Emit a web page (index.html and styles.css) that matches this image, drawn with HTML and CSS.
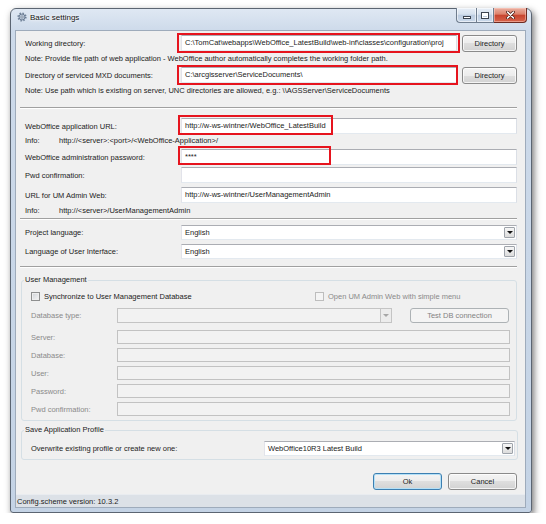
FILE: index.html
```html
<!DOCTYPE html>
<html>
<head>
<meta charset="utf-8">
<title>Basic settings</title>
<link rel="stylesheet" href="styles.css">
</head>
<body>
<div class="window">
  <div class="titlebar">
    <svg class="appicon" width="10" height="10" viewBox="0 0 10 10">
      <circle cx="5" cy="5" r="3.6" fill="none" stroke="#6f8298" stroke-width="2" stroke-dasharray="1.4 1.43"/>
      <circle cx="5" cy="5" r="3" fill="#b7c5d5" stroke="#5f7088" stroke-width="0.8"/>
      <circle cx="5" cy="5" r="1.1" fill="#e9eef4" stroke="#5f7088" stroke-width="0.6"/>
    </svg>
    <span class="title">Basic settings</span>
    <div class="caption">
      <div class="cbtn min"><span class="g-min"></span></div>
      <div class="cbtn max"><span class="g-max"></span></div>
      <div class="cbtn close">
        <svg width="9" height="8" viewBox="0 0 9 8">
          <path d="M1.5 1 L7.5 7 M7.5 1 L1.5 7" stroke="#4a1a12" stroke-width="3" stroke-linecap="round"/>
          <path d="M1.5 1 L7.5 7 M7.5 1 L1.5 7" stroke="#ffffff" stroke-width="1.6" stroke-linecap="round"/>
        </svg>
      </div>
    </div>
  </div>

  <div class="client">
    <div class="row r-a">
      <span class="lbl">Working directory:</span>
      <div class="field f-dir">
        <div class="tb">C:\TomCat\webapps\WebOffice_LatestBuild\web-inf\classes\configuration\proj</div>
        <span class="mark mark-a"></span>
      </div>
      <div class="btn dirbtn">Directory</div>
    </div>
    <div class="note n1">Note: Provide file path of web application - WebOffice author automatically completes the working folder path.</div>
    <div class="row r-b">
      <span class="lbl">Directory of serviced MXD documents:</span>
      <div class="field f-dir">
        <div class="tb">C:\arcgisserver\ServiceDocuments\</div>
        <span class="mark mark-b"></span>
      </div>
      <div class="btn dirbtn">Directory</div>
    </div>
    <div class="note n2">Note: Use path which is existing on server, UNC directories are allowed, e.g.: \\AGSServer\ServiceDocuments</div>

    <div class="sep s1"></div>

    <div class="row r-c">
      <span class="lbl">WebOffice application URL:</span>
      <div class="field grow">
        <div class="tb">http://w-ws-wintner/WebOffice_LatestBuild</div>
        <span class="mark mark-c"></span>
      </div>
    </div>
    <div class="info i1"><span class="ilbl">Info:</span><span>http://&lt;server&gt;:&lt;port&gt;/&lt;WebOffice-Application&gt;/</span></div>
    <div class="row r-d">
      <span class="lbl">WebOffice administration password:</span>
      <div class="field grow">
        <div class="tb">****</div>
        <span class="mark mark-d"></span>
      </div>
    </div>
    <div class="row r-e">
      <span class="lbl">Pwd confirmation:</span>
      <div class="field grow"><div class="tb"></div></div>
    </div>
    <div class="row r-f">
      <span class="lbl">URL for UM Admin Web:</span>
      <div class="field grow"><div class="tb">http://w-ws-wintner/UserManagementAdmin</div></div>
    </div>
    <div class="info i2"><span class="ilbl">Info:</span><span>http://&lt;server&gt;/UserManagementAdmin</span></div>

    <div class="sep s2"></div>

    <div class="row r-g">
      <span class="lbl">Project language:</span>
      <div class="combo grow"><span class="val">English</span><span class="arrow"></span></div>
    </div>
    <div class="row r-h">
      <span class="lbl">Language of User Interface:</span>
      <div class="combo grow"><span class="val">English</span><span class="arrow"></span></div>
    </div>

    <div class="sep s3"></div>

    <fieldset class="group g-um">
      <legend>User Management</legend>
      <div class="cbrow">
        <div class="cbitem first"><span class="cb"></span><span>Synchronize to User Management Database</span></div>
        <div class="cbitem disabled"><span class="cb off"></span><span>Open UM Admin Web with simple menu</span></div>
      </div>
      <div class="urow u-type">
        <span class="ulbl">Database type:</span>
        <div class="combo dis dbcombo"><span class="val"></span><span class="arrow"></span></div>
        <div class="btn disbtn">Test DB connection</div>
      </div>
      <div class="urow u-box"><span class="ulbl">Server:</span><div class="dbox"></div></div>
      <div class="urow u-box"><span class="ulbl">Database:</span><div class="dbox"></div></div>
      <div class="urow u-box"><span class="ulbl">User:</span><div class="dbox"></div></div>
      <div class="urow u-box"><span class="ulbl">Password:</span><div class="dbox"></div></div>
      <div class="urow u-box"><span class="ulbl">Pwd confirmation:</span><div class="dbox"></div></div>
    </fieldset>

    <fieldset class="group g-save">
      <legend>Save Application Profile</legend>
      <div class="srow">
        <span class="slbl">Overwrite existing profile or create new one:</span>
        <div class="combo scombo"><span class="val">WebOffice10R3 Latest Build</span><span class="arrow"></span></div>
      </div>
    </fieldset>

    <div class="actions">
      <div class="btn okbtn">Ok</div>
      <div class="btn">Cancel</div>
    </div>

    <div class="status">Config.scheme version: 10.3.2</div>
  </div>
</div>
</body>
</html>
```

FILE: styles.css
```css
* { box-sizing: border-box; }

body {
  margin: 0;
  background: #ffffff;
  font-family: "Liberation Sans", Arial, sans-serif;
  font-size: 7.5px;
  color: #222222;
}

.window {
  margin: 8px 0 0 10px;
  width: 522px;
  height: 505px;
  border: 1px solid #5b6572;
  border-radius: 6px 6px 3px 3px;
  background: linear-gradient(#dfe8f3 0px, #cddaea 22px, #c4d3e5 100%);
  box-shadow: 2px 3px 7px rgba(0, 0, 0, 0.55);
  padding: 0 5px 4px 4px;
  display: flex;
  flex-direction: column;
}

/* title bar */
.titlebar {
  height: 21px;
  display: flex;
  align-items: flex-start;
  flex: none;
}
.appicon { margin: 3px 0 0 2px; flex: none; }
.title {
  margin: 3px 0 0 3px;
  line-height: 12px;
  font-size: 8px;
  color: #111;
  text-shadow: 0 0 4px #fff, 0 0 2px #fff;
}
.caption {
  margin: -1px -1px 0 auto;
  display: flex;
  height: 15px;
}
.cbtn {
  height: 15px;
  border: 1px solid #6f7d8e;
  border-top: none;
  display: flex;
  align-items: center;
  justify-content: center;
  background: linear-gradient(#e7eef7 0%, #d6e1ee 45%, #bccce0 50%, #cad9eb 100%);
  box-shadow: inset 0 0 0 1px rgba(255, 255, 255, 0.55);
}
.cbtn.min { width: 20px; border-radius: 0 0 0 4px; border-right: none; }
.cbtn.max { width: 18px; }
.cbtn.close {
  width: 33px;
  border-left: none;
  border-color: #6d2b22;
  border-radius: 0 0 4px 0;
  background: linear-gradient(#eab0a2 0%, #dc8069 45%, #c7432e 50%, #d7644b 100%);
  box-shadow: inset 0 0 0 1px rgba(255, 210, 200, 0.5);
}
.g-min {
  width: 8px;
  height: 3px;
  margin-top: 5px;
  background: #fff;
  border: 1px solid #3c4450;
}
.g-max {
  width: 8px;
  height: 7px;
  border: 1px solid #3c4450;
  background: transparent;
  box-shadow: inset 0 0 0 1px #fff, inset 0 2px 0 1px #fff;
}

/* client area */
.client {
  height: 478px;
  flex: none;
  background: #f0f0f0;
  border: 1px solid #9eabbb;
  display: flex;
  flex-direction: column;
}

.row {
  display: flex;
  align-items: center;
  height: 16px;
  margin: 0 8px 0 9px;
  flex: none;
}
.lbl { width: 156px; flex: none; white-space: nowrap; }
.field { position: relative; height: 16px; }
.field.f-dir { width: 276px; flex: none; }
.grow { flex: 1; }

.tb {
  height: 16px;
  border: 1px solid;
  border-color: #abadb3 #dbdfe6 #e3e9ef #e2e3ea;
  background: #ffffff;
  padding: 0 3px;
  line-height: 14px;
  white-space: nowrap;
  overflow: hidden;
}

.mark {
  position: absolute;
  border: 2px solid #e6141e;
  pointer-events: none;
}
.mark-a { left: -4px; top: -2px; width: 283px; height: 20px; }
.mark-b { left: -4px; top: -2px; width: 281px; height: 20px; }
.mark-c { left: -3px; top: -3px; width: 155px; height: 20px; }
.mark-d { left: -3px; top: -3px; width: 153px; height: 19px; }

.r-a { margin-top: 4px; }
.r-b { margin-top: 2px; }
.r-c { margin-top: 9px; }
.r-d { margin-top: 2px; }
.r-e { margin-top: 2px; }
.r-f { margin-top: 4px; }
.r-g { margin-top: 5px; height: 15px; }
.r-h { margin-top: 4px; height: 15px; }

.note {
  margin: 2px 0 0 9px;
  line-height: 12px;
  height: 12px;
  white-space: nowrap;
  flex: none;
}

.info {
  margin: 2px 0 0 9px;
  line-height: 12px;
  height: 12px;
  display: flex;
  white-space: nowrap;
  flex: none;
}
.info.i1 { margin-top: 1px; }
.ilbl { width: 34px; flex: none; }

.sep {
  height: 2px;
  margin: 0 8px 0 4px;
  border-top: 1px solid #a0a0a0;
  border-bottom: 1px solid #ffffff;
  flex: none;
}
.s1 { margin-top: 10px; }
.s2 { margin-top: 1px; }
.s3 { margin-top: 7px; }

/* buttons */
.btn {
  height: 17px;
  border: 1px solid #8a8a8a;
  border-radius: 3px;
  background: linear-gradient(#f4f4f4 0%, #ececec 50%, #dedede 50%, #d2d2d2 100%);
  box-shadow: inset 0 0 0 1px rgba(255, 255, 255, 0.75);
  display: flex;
  align-items: center;
  justify-content: center;
  color: #1e1e1e;
  flex: none;
}
.dirbtn { width: 55px; margin-left: 5px; }

/* combo */
.combo {
  height: 15px;
  display: flex;
  align-items: center;
  border: 1px solid;
  border-color: #abadb3 #dbdfe6 #e3e9ef #e2e3ea;
  background: #ffffff;
}
.combo .val { flex: 1; padding-left: 3px; white-space: nowrap; line-height: 13px; }
.combo .arrow {
  width: 11px;
  height: 11px;
  margin-right: 1px;
  border: 1px solid #9ea3aa;
  border-radius: 1px;
  background: linear-gradient(#f6f6f6, #dcdcdc);
  display: flex;
  align-items: center;
  justify-content: center;
  flex: none;
}
.combo .arrow::after {
  content: "";
  border-left: 3px solid transparent;
  border-right: 3px solid transparent;
  border-top: 3px solid #111;
}
.combo.dis {
  border: 1px solid #c4c4c4;
  background: #f2f2f2;
}
.combo.dis .arrow {
  height: 13px;
  margin-right: 0;
  border: none;
  border-left: 1px solid #c4c4c4;
  border-radius: 0;
  background: #ececec;
}
.combo.dis .arrow::after { border-top-color: #a6a6a6; }

/* group boxes */
.group {
  margin: 6px 8px 0 5px;
  border: 1px solid #d5dfe5;
  border-radius: 3px;
  padding: 0 0 4px 2px;
  min-width: 0;
  flex: none;
}
.group legend {
  padding: 0 1px;
  line-height: 12px;
  font-size: 7.5px;
  color: #222222;
}
.g-save { margin: 3px 7px 0 5px; padding-bottom: 3px; }

.cbrow {
  display: flex;
  align-items: center;
  height: 12px;
  margin: 4px 0 0 7px;
}
.cbitem { display: flex; align-items: center; white-space: nowrap; }
.cbitem.first { width: 284px; flex: none; }
.cbitem.disabled { color: #8a8a8a; }
.cb {
  width: 9px;
  height: 9px;
  margin-right: 4px;
  border: 1px solid #8e8f8f;
  background: linear-gradient(135deg, #cfd2d6, #f7f7f7);
  box-shadow: inset 0 0 0 1px #eeeeee;
  flex: none;
}
.cb.off {
  border-color: #bdbdbd;
  background: #f4f4f4;
  box-shadow: none;
}

.urow {
  display: flex;
  align-items: center;
  margin-left: 7px;
  color: #8a8a8a;
}
.u-type { height: 15px; margin-top: 6px; }
.u-box { height: 14px; margin-top: 4px; }
.u-type + .u-box { margin-top: 7px; }
.ulbl { width: 86px; flex: none; white-space: nowrap; }
.dbcombo { width: 275px; flex: none; }
.disbtn {
  width: 99px;
  height: 15px;
  margin-left: 18px;
  border-color: #adb2b5;
  background: #f4f4f4;
  box-shadow: none;
  color: #838383;
}
.dbox {
  width: 393px;
  height: 14px;
  border: 1px solid #c2c2c2;
  background: #f2f2f2;
  flex: none;
}

.srow {
  display: flex;
  align-items: center;
  height: 15px;
  margin: 5px 0 0 7px;
}
.slbl { width: 233px; flex: none; white-space: nowrap; }
.scombo { width: 251px; flex: none; }

/* dialog buttons */
.actions {
  display: flex;
  justify-content: flex-end;
  gap: 6px;
  margin: 13px 8px 0 0;
  flex: none;
}
.actions .btn { width: 69px; }
.okbtn {
  border-color: #3c7fb1;
  box-shadow: inset 0 0 0 1px #b4e0f7;
}

.status {
  margin-top: auto;
  height: 13px;
  line-height: 13px;
  padding-left: 1px;
  background: #dce1e7;
  border-top: 1px solid #e9ecf0;
  white-space: nowrap;
  flex: none;
}
```
